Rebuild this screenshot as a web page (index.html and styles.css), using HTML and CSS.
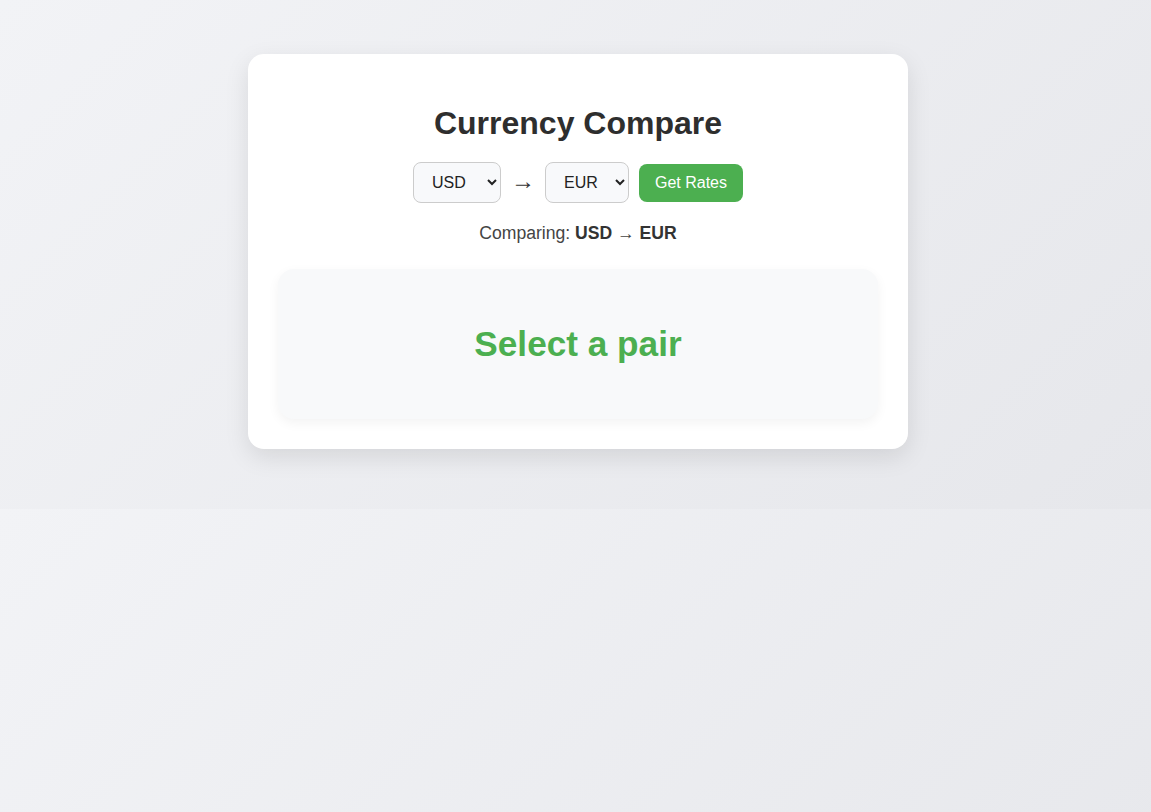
FILE: index.html
```html
<!DOCTYPE html>
<html lang="en">
<head>
    <meta charset="UTF-8">
    <meta name="viewport" content="width=device-width, initial-scale=1.0">
    <title>Currency Compare</title>
    <link rel="stylesheet" href="styles.css">
</head>
<body>

<div class="container">
    <h1>Currency Compare</h1>

    <!-- Pair picker -->
    <div class="controls">
        <select id="fromCurrency" class="currency-select">
            <option value="USD" selected>USD</option>
            <option value="EUR">EUR</option>
            <option value="GBP">GBP</option>
            <option value="JPY">JPY</option>
        </select>
        <span class="arrow">&rarr;</span>
        <select id="toCurrency" class="currency-select">
            <option value="EUR" selected>EUR</option>
            <option value="USD">USD</option>
            <option value="GBP">GBP</option>
            <option value="JPY">JPY</option>
        </select>
        <button class="rates-btn">Get Rates</button>
    </div>

    <div class="pair-label">Comparing: <strong>USD</strong> &rarr; <strong>EUR</strong></div>

    <div class="rate-box">
        <div class="rate-value">Select a pair</div>
    </div>
</div>

</body>
</html>
```

FILE: styles.css
```css
body {
    font-family: 'Liberation Sans', Arial, sans-serif;
    background: linear-gradient(135deg, #f2f3f6 0%, #e6e7eb 100%);
    margin: 0;
    padding: 54px 0 60px 5px;
    color: #333;
}

.container {
    background-color: #ffffff;
    width: 600px;
    margin: 0 auto;
    padding: 30px;
    border-radius: 16px;
    box-shadow: 0 8px 24px rgba(0, 0, 0, 0.1);
    text-align: center;
}

h1 {
    font-size: 32px;
    color: #2e2e2e;
    margin: 21px 0 20px;
}

.controls {
    display: flex;
    justify-content: center;
    align-items: center;
    gap: 10px;
}

.currency-select {
    font-family: inherit;
    font-size: 16px;
    color: #222;
    padding: 10px 14px;
    border: 1px solid #ccc;
    border-radius: 8px;
    background-color: #f8f9fb;
}

#fromCurrency {
    width: 88px;
}

#toCurrency {
    width: 84px;
}

.arrow {
    font-size: 24px;
    line-height: 1;
    color: #333;
    margin-top: -3px;
}

.rates-btn {
    font-family: inherit;
    font-size: 16px;
    color: #fff;
    background-color: #4caf50;
    border: none;
    border-radius: 8px;
    padding: 10px 16px;
    cursor: pointer;
}

.rates-btn:hover {
    background-color: #43a047;
}

.pair-label {
    font-size: 17.6px;
    color: #444;
    margin-top: 20px;
}

.pair-label strong {
    color: #333;
}

.rate-box {
    margin-top: 25px;
    padding: 55px 20px;
    background-color: #f8f9fa;
    border-radius: 16px;
    box-shadow: 0 4px 12px rgba(0, 0, 0, 0.05);
}

.rate-value {
    font-size: 35.2px;
    font-weight: 700;
    color: #4caf50;
}
```
